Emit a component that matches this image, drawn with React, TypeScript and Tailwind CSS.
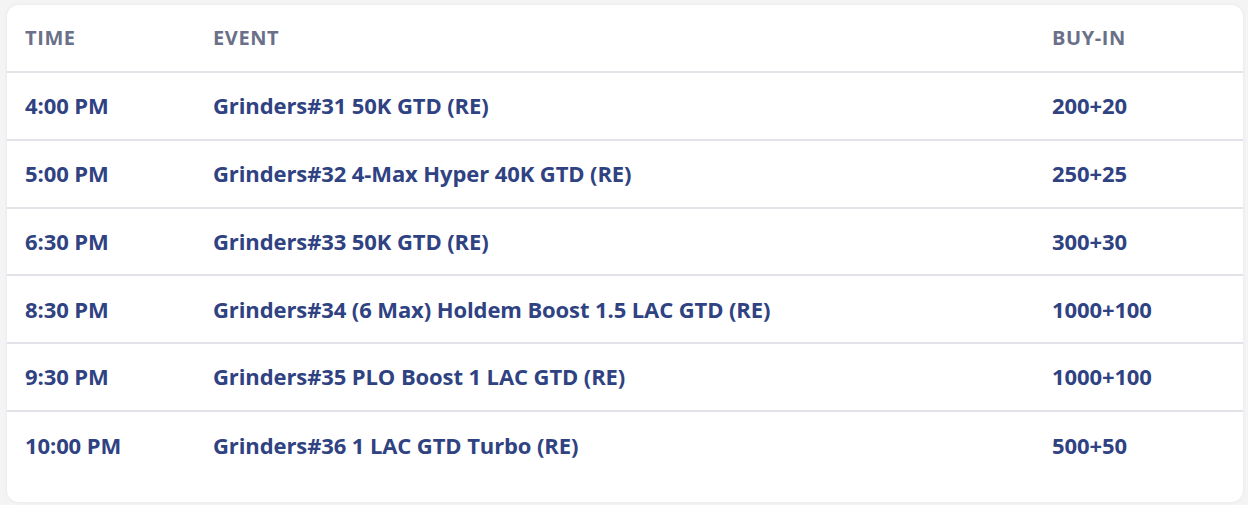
const rows = [
  { time: '4:00 PM', event: 'Grinders#31 50K GTD (RE)', buyIn: '200+20' },
  { time: '5:00 PM', event: 'Grinders#32 4-Max Hyper 40K GTD (RE)', buyIn: '250+25' },
  { time: '6:30 PM', event: 'Grinders#33 50K GTD (RE)', buyIn: '300+30' },
  { time: '8:30 PM', event: 'Grinders#34 (6 Max) Holdem Boost 1.5 LAC GTD (RE)', buyIn: '1000+100' },
  { time: '9:30 PM', event: 'Grinders#35 PLO Boost 1 LAC GTD (RE)', buyIn: '1000+100' },
  { time: '10:00 PM', event: 'Grinders#36 1 LAC GTD Turbo (RE)', buyIn: '500+50' },
]

export default function App() {
  return (
    <div className="min-h-[505px] bg-[#f4f4f5] pt-[5px] pl-[7px] pr-[5px] pb-[4px] font-['Open_Sans',sans-serif]">
      <div className="bg-white rounded-xl shadow-[0_0_4px_rgba(0,0,0,0.06)] pb-[23px]">
        <table className="w-full border-collapse">
          <thead>
            <tr className="border-b-2 border-[#e1e3e8]">
              <th className="w-[206px] h-[67px] pl-[18px] text-left text-[20px] font-bold uppercase text-[#6b7089] tracking-[0.6px]">Time</th>
              <th className="w-[839px] text-left text-[20px] font-bold uppercase text-[#6b7089] tracking-[0.6px]">Event</th>
              <th className="text-left text-[20px] font-bold uppercase text-[#6b7089] tracking-[0.6px]">Buy-in</th>
            </tr>
          </thead>
          <tbody>
            {rows.map((r, i) => (
              <tr key={r.time} className={i < rows.length - 1 ? 'border-b-2 border-[#e1e3e8]' : ''}>
                <td className="h-[67.75px] pl-[18px] text-[22px] font-bold text-[#2f4282] tracking-[-0.1px]">{r.time}</td>
                <td className="text-[22px] font-bold text-[#2f4282] tracking-[-0.1px]">{r.event}</td>
                <td className="text-[22px] font-bold text-[#2f4282] tracking-[-0.1px]">{r.buyIn}</td>
              </tr>
            ))}
          </tbody>
        </table>
      </div>
    </div>
  )
}
